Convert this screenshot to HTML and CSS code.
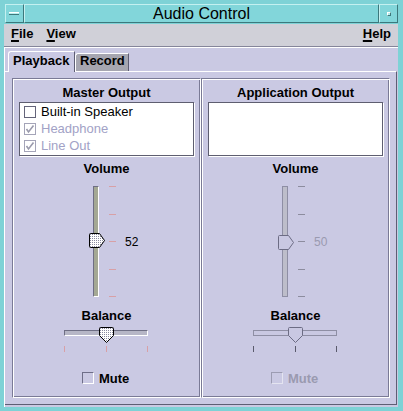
FILE: index.html
```html
<!DOCTYPE html>
<html>
<head>
<meta charset="utf-8">
<title>Audio Control</title>
<link rel="stylesheet" href="styles.css">
</head>
<body>
<div class="window">
  <div class="titlebar">
    <div class="tbtn"><span class="minus"></span></div>
    <div class="title">Audio Control</div>
    <div class="tbtn"><span class="dot"></span></div>
  </div>
  <div class="menubar">
    <span class="menu"><span class="mn">F</span>ile</span>
    <span class="menu"><span class="mn">V</span>iew</span>
    <span class="menu help"><span class="mn">H</span>elp</span>
  </div>
  <div class="content">
    <div class="tabs">
      <div class="tab active">Playback</div>
      <div class="tab">Record</div>
    </div>
    <div class="panel">
      <div class="group">
        <div class="heading first">Master Output</div>
        <div class="listbox">
          <div class="item"><span class="cb"></span><span>Built-in Speaker</span></div>
          <div class="item off"><span class="cb"><svg width="10" height="10" viewBox="0 0 10 10"><polyline points="1.5,5 3.5,8 8.5,1.5" fill="none" stroke="#9a9aac" stroke-width="1.6"/></svg></span><span>Headphone</span></div>
          <div class="item off"><span class="cb"><svg width="10" height="10" viewBox="0 0 10 10"><polyline points="1.5,5 3.5,8 8.5,1.5" fill="none" stroke="#9a9aac" stroke-width="1.6"/></svg></span><span>Line Out</span></div>
        </div>
        <div class="heading vol">Volume</div>
        <div class="vslider">
          <div class="vwrap">
            <div class="vtrack"></div>
            <svg class="vthumb" style="top:47px" width="16" height="15" viewBox="0 0 16 15">
              <defs><pattern id="dotsA" width="2" height="2" patternUnits="userSpaceOnUse"><rect width="2" height="2" fill="#fff"/><rect x="1" y="1" width="1" height="1" fill="#8a8aa0"/></pattern></defs>
              <path d="M1.5 0.5H10.5L15.5 7.5L10.5 14.5H1.5Q0.5 14.5 0.5 13.5V1.5Q0.5 0.5 1.5 0.5Z" fill="url(#dotsA)" stroke="#000"/>
            </svg>
          </div>
          <div class="vticks"><i></i><i></i><i></i><i></i><i></i></div>
          <div class="vval">52</div>
        </div>
        <div class="heading bal">Balance</div>
        <div class="hslider">
          <div class="htrack"></div>
          <svg class="hthumb" style="left:35px" width="15" height="16" viewBox="0 0 15 16">
            <defs><pattern id="dotsB" width="2" height="2" patternUnits="userSpaceOnUse"><rect width="2" height="2" fill="#fff"/><rect x="1" y="1" width="1" height="1" fill="#8a8aa0"/></pattern></defs>
            <path d="M1.5 0.5H13.5Q14.5 0.5 14.5 1.5V8.5L7.5 15.5L0.5 8.5V1.5Q0.5 0.5 1.5 0.5Z" fill="url(#dotsB)" stroke="#000"/>
          </svg>
          <div class="hticks"><i></i><i></i><i></i></div>
        </div>
        <div class="mute"><span class="mbox"></span><span>Mute</span></div>
      </div>
      <div class="group disabled">
        <div class="heading first">Application Output</div>
        <div class="listbox"></div>
        <div class="heading vol">Volume</div>
        <div class="vslider">
          <div class="vwrap">
            <div class="vtrack"></div>
            <svg class="vthumb" style="top:49px" width="16" height="15" viewBox="0 0 16 15">
              <path d="M1.5 0.5H10.5L15.5 7.5L10.5 14.5H1.5Q0.5 14.5 0.5 13.5V1.5Q0.5 0.5 1.5 0.5Z" fill="#c9c8e2" stroke="#6c6c84"/>
            </svg>
          </div>
          <div class="vticks"><i></i><i></i><i></i><i></i><i></i></div>
          <div class="vval">50</div>
        </div>
        <div class="heading bal">Balance</div>
        <div class="hslider">
          <div class="htrack"></div>
          <svg class="hthumb" style="left:35px" width="15" height="16" viewBox="0 0 15 16">
            <path d="M1.5 0.5H13.5Q14.5 0.5 14.5 1.5V8.5L7.5 15.5L0.5 8.5V1.5Q0.5 0.5 1.5 0.5Z" fill="#c9c8e2" stroke="#6c6c84"/>
          </svg>
          <div class="hticks"><i></i><i></i><i></i></div>
        </div>
        <div class="mute"><span class="mbox"></span><span>Mute</span></div>
      </div>
    </div>
  </div>
</div>
</body>
</html>
```

FILE: styles.css
```css
* {
  box-sizing: border-box;
  margin: 0;
  padding: 0;
}

body {
  margin: 0;
  font-family: "Liberation Sans", Arial, sans-serif;
  font-size: 13px;
  color: #000;
  background: #7ed2d6;
}

.window {
  width: 403px;
  height: 411px;
  background: #7ed2d6;
  padding: 0 5px 4px 4px;
  display: flex;
  flex-direction: column;
}

/* ---------- title bar ---------- */
.titlebar {
  height: 24px;
  padding-top: 4px;
  margin-left: 1px;
  display: flex;
  flex: none;
}

.tbtn,
.title {
  height: 19px;
  border: 1px solid;
  border-color: #c4f0f0 #3c787c #3c787c #c4f0f0;
  background: #82d6da;
}

.tbtn {
  width: 19px;
  display: flex;
  align-items: center;
  justify-content: center;
}

.title {
  flex: 1;
  text-align: center;
  font-size: 16px;
  line-height: 17px;
  color: #000;
}

.minus {
  width: 10px;
  height: 3px;
  margin-right: 1px;
  background: #b6ecec;
  border-top: 1px solid #ffffff;
  border-bottom: 1px solid #3c787c;
}

.dot {
  width: 4px;
  height: 4px;
  background: #b6ecec;
  border: 1px solid;
  border-color: #ffffff #3c787c #3c787c #ffffff;
}

/* ---------- menu bar ---------- */
.menubar {
  height: 23px;
  flex: none;
  display: flex;
  padding: 2px 7px 0 7px;
  background: #d0d0d8;
  border-bottom: 1px solid #85859a;
  font-weight: bold;
  line-height: 16px;
}

.menu + .menu {
  margin-left: 13px;
}

.menu.help {
  margin-left: auto;
}

.mn {
  text-decoration: underline;
  text-decoration-thickness: 2px;
  text-underline-offset: 2px;
}

/* ---------- content ---------- */
.content {
  flex: 1;
  display: flex;
  flex-direction: column;
  background: #cac9e3;
  border-top: 1px solid #ffffff;
  border-left: 1px solid #ffffff;
}

.tabs {
  height: 23px;
  flex: none;
  display: flex;
  align-items: flex-end;
  padding-left: 3px;
}

.tab {
  font-weight: bold;
  border-top: 1px solid #ffffff;
  border-left: 1px solid #ffffff;
  border-right: 1px solid #5e5e74;
  border-top-left-radius: 3px;
}

.tab.active {
  position: relative;
  z-index: 1;
  width: 67px;
  height: 21px;
  margin-bottom: -1px;
  padding: 1px 0 0 4px;
  line-height: 16px;
  background: #cac9e3;
}

.tab:not(.active) {
  width: 54px;
  height: 18px;
  padding: 0 0 0 4px;
  line-height: 13px;
  background: #a6a6b0;
}

.panel {
  height: 334px;
  flex: none;
  margin-right: 1px;
  display: flex;
  padding: 6px 6px 6px 7px;
  border-top: 1px solid #ffffff;
  border-right: 1px solid #5e5e74;
  border-bottom: 1px solid #5e5e74;
}

/* ---------- group boxes ---------- */
.group {
  width: 189px;
  height: 320px;
  flex: none;
  border: 1px solid;
  border-color: #7a7a96 #ffffff #ffffff #7a7a96;
  box-shadow: inset 1px 1px 0 #ffffff, inset -1px -1px 0 #7a7a96;
}

.heading {
  font-weight: bold;
  line-height: 15px;
  text-align: center;
}

.heading.first {
  margin-top: 6px;
}

.heading.vol {
  margin-top: 5px;
}

.heading.bal {
  margin-top: 11px;
}

.listbox {
  margin: 2px 6px 0 6px;
  height: 54px;
  background: #ffffff;
  border: 1px solid #5e5e70;
  box-shadow: 1px 1px 0 #ffffff;
}

.item {
  height: 17px;
  display: flex;
  align-items: center;
  padding-left: 4px;
  gap: 5px;
  line-height: 15px;
}

.item.off {
  color: #a2a2c6;
}

.cb {
  width: 12px;
  height: 12px;
  border: 1px solid #64647a;
  background: #ffffff;
  display: flex;
  align-items: center;
  justify-content: center;
}

.item.off .cb {
  border-color: #a4a4b8;
}

/* vertical slider */
.vslider {
  margin: 10px 0 0 76px;
  height: 111px;
  display: flex;
}

.vwrap {
  position: relative;
  width: 16px;
}

.vtrack {
  margin-left: 4px;
  width: 6px;
  height: 100%;
  background: #a4a894;
  border: 1px solid;
  border-color: #6e6e84 #ffffff #ffffff #6e6e84;
}

.vthumb {
  position: absolute;
  left: 0;
  display: block;
}

.vticks {
  margin-left: 4px;
  width: 7px;
  display: flex;
  flex-direction: column;
  justify-content: space-between;
}

.vticks i {
  display: block;
  height: 1px;
  background: #d8a0a6;
}

.vval {
  margin-left: 9px;
  align-self: center;
  font-size: 12px;
  line-height: 14px;
}

/* horizontal slider */
.hslider {
  position: relative;
  margin: 4px 0 0 51px;
  width: 84px;
  height: 25px;
  padding-top: 3px;
}

.htrack {
  height: 6px;
  background: #b6b6c6;
  border: 1px solid;
  border-color: #6e6e84 #ffffff #ffffff #6e6e84;
}

.hthumb {
  position: absolute;
  top: 0;
  display: block;
}

.hticks {
  margin-top: 10px;
  height: 6px;
  display: flex;
  justify-content: space-between;
}

.hticks i {
  display: block;
  width: 1px;
  background: #d8a0a6;
}

/* mute */
.mute {
  margin: 18px 0 0 69px;
  height: 16px;
  display: flex;
  align-items: center;
  gap: 5px;
  font-weight: bold;
}

.mbox {
  width: 12px;
  height: 12px;
  border: 1px solid;
  border-color: #6e6e88 #ffffff #ffffff #6e6e88;
}

/* disabled group */
.disabled .vtrack {
  background: #bdbdca;
  border-color: #8e8ea4;
}

.disabled .vticks i {
  background: #8c8c9e;
}

.disabled .vval {
  color: #9a9ab0;
}

.disabled .htrack {
  background: #c9c8e2;
  border-color: #8e8ea4;
}

.disabled .hticks i {
  background: #5a5a6c;
}

.disabled .mute {
  color: #9a9ab0;
}

.disabled .mbox {
  border-color: #9c9cb2 #e4e4f0 #e4e4f0 #9c9cb2;
}
```
